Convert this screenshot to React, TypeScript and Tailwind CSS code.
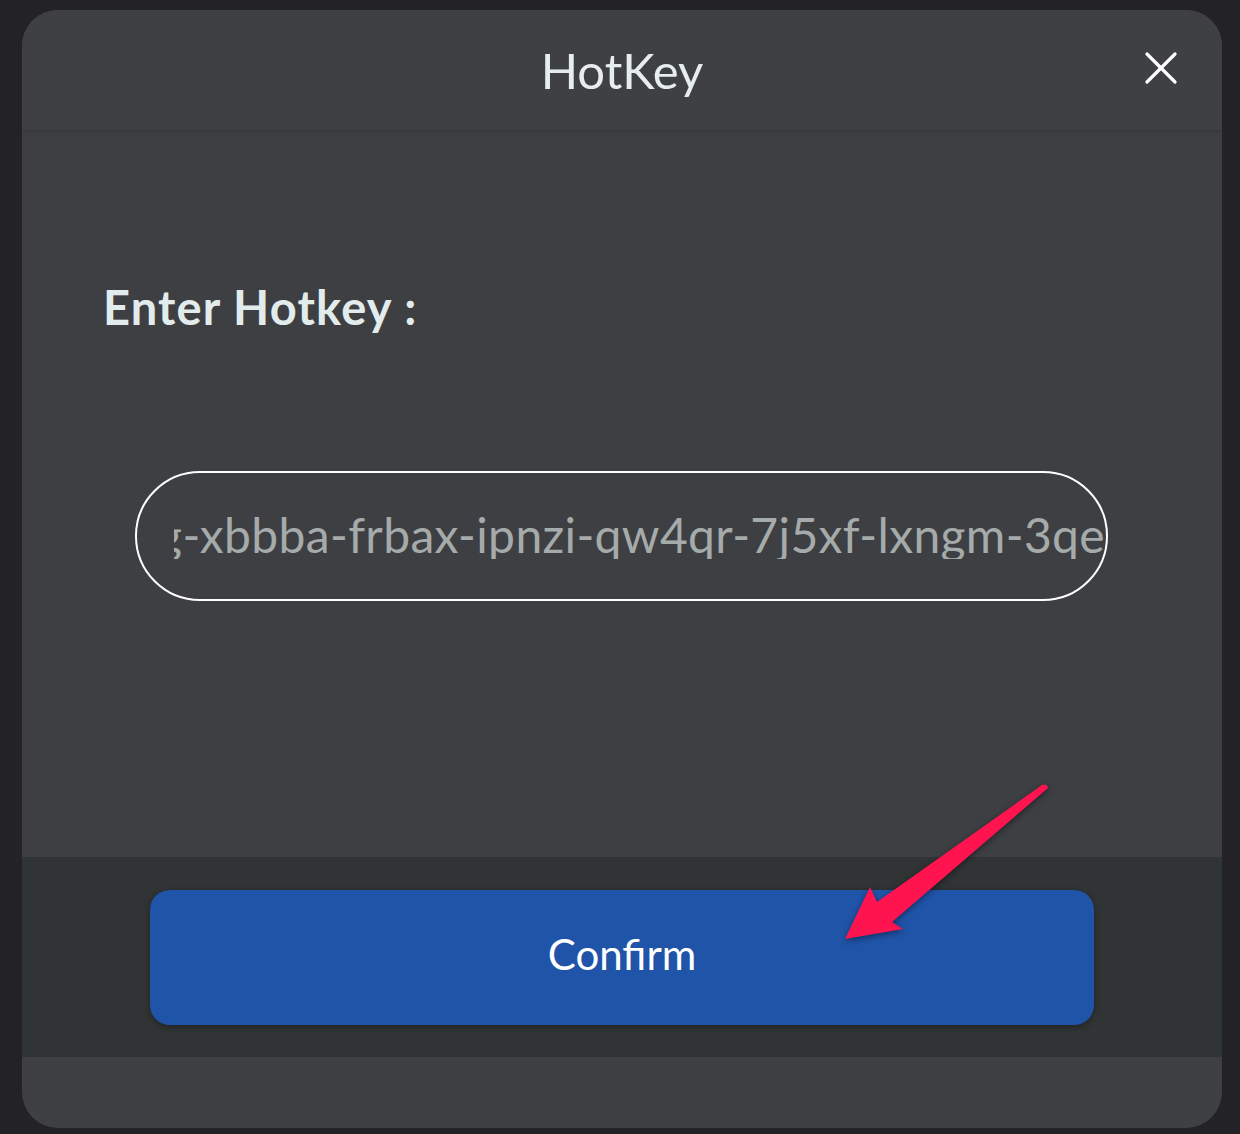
import { X } from "lucide-react";

const hotkey = "qzvfd-emhpg-xbbba-frbax-ipnzi-qw4qr-7j5xf-lxngm-3qe";

function PointerArrow() {
  return (
    <svg
      aria-hidden="true"
      className="pointer-events-none absolute left-0 top-0 drop-shadow-[0_2px_3px_rgba(0,0,0,0.45)]"
      height="1134"
      viewBox="0 0 1240 1134"
      width="1240"
    >
      <path
        d="M845 939 L870 887 L877 902 L1042 785 Q1047 783 1048 788 L892 922 L903 929 Z"
        fill="#ff1450"
        strokeLinejoin="round"
      />
    </svg>
  );
}

export default function App() {
  return (
    <div className="relative min-h-[1134px] bg-[#232327] pl-[22px] pr-[18px] pt-[10px] font-['Lato','Noto_Sans',sans-serif]">
      <div className="flex h-[1118px] w-[1200px] flex-col overflow-hidden rounded-[36px] bg-[#3f4044]">
        <header className="relative z-10 flex h-[120px] shrink-0 items-center justify-center bg-[#3f4044] shadow-[0_2px_4px_rgba(0,0,0,0.12)]">
          <h1 className="text-[49px] leading-none text-[#e6eded]">HotKey</h1>
          <button
            aria-label="Close"
            className="absolute right-[33px] top-[30px] flex size-[56px] items-center justify-center text-white"
            type="button"
          >
            <X className="size-[56px]" strokeWidth={1.4} />
          </button>
        </header>

        <section className="flex h-[727px] shrink-0 flex-col bg-[#3e3f43]">
          <label className="ml-[81px] mt-[154px] text-[47px] font-bold leading-none tracking-[0.025em] text-[#e3ecec]">
            Enter Hotkey :
          </label>
          <div className="ml-[113px] mt-[140px] flex h-[130px] w-[973px] items-center rounded-full border-2 border-white pb-[3px] pl-[37px] pr-[1px]">
            <div className="flex min-w-0 flex-1 justify-end overflow-hidden">
              <span className="whitespace-nowrap text-[48px] leading-none tracking-[0.35px] text-[#a5abaa]">{hotkey}</span>
            </div>
          </div>
        </section>

        <footer className="flex h-[200px] shrink-0 items-center justify-center bg-[#313435] px-[128px]">
          <button
            className="flex h-[135px] w-full items-center justify-center rounded-[20px] bg-[#2054a8] pb-[6px] text-[42px] text-white shadow-[0_2px_6px_rgba(0,0,0,0.35)]"
            type="button"
          >
            Confirm
          </button>
        </footer>
      </div>
      <PointerArrow />
    </div>
  );
}
